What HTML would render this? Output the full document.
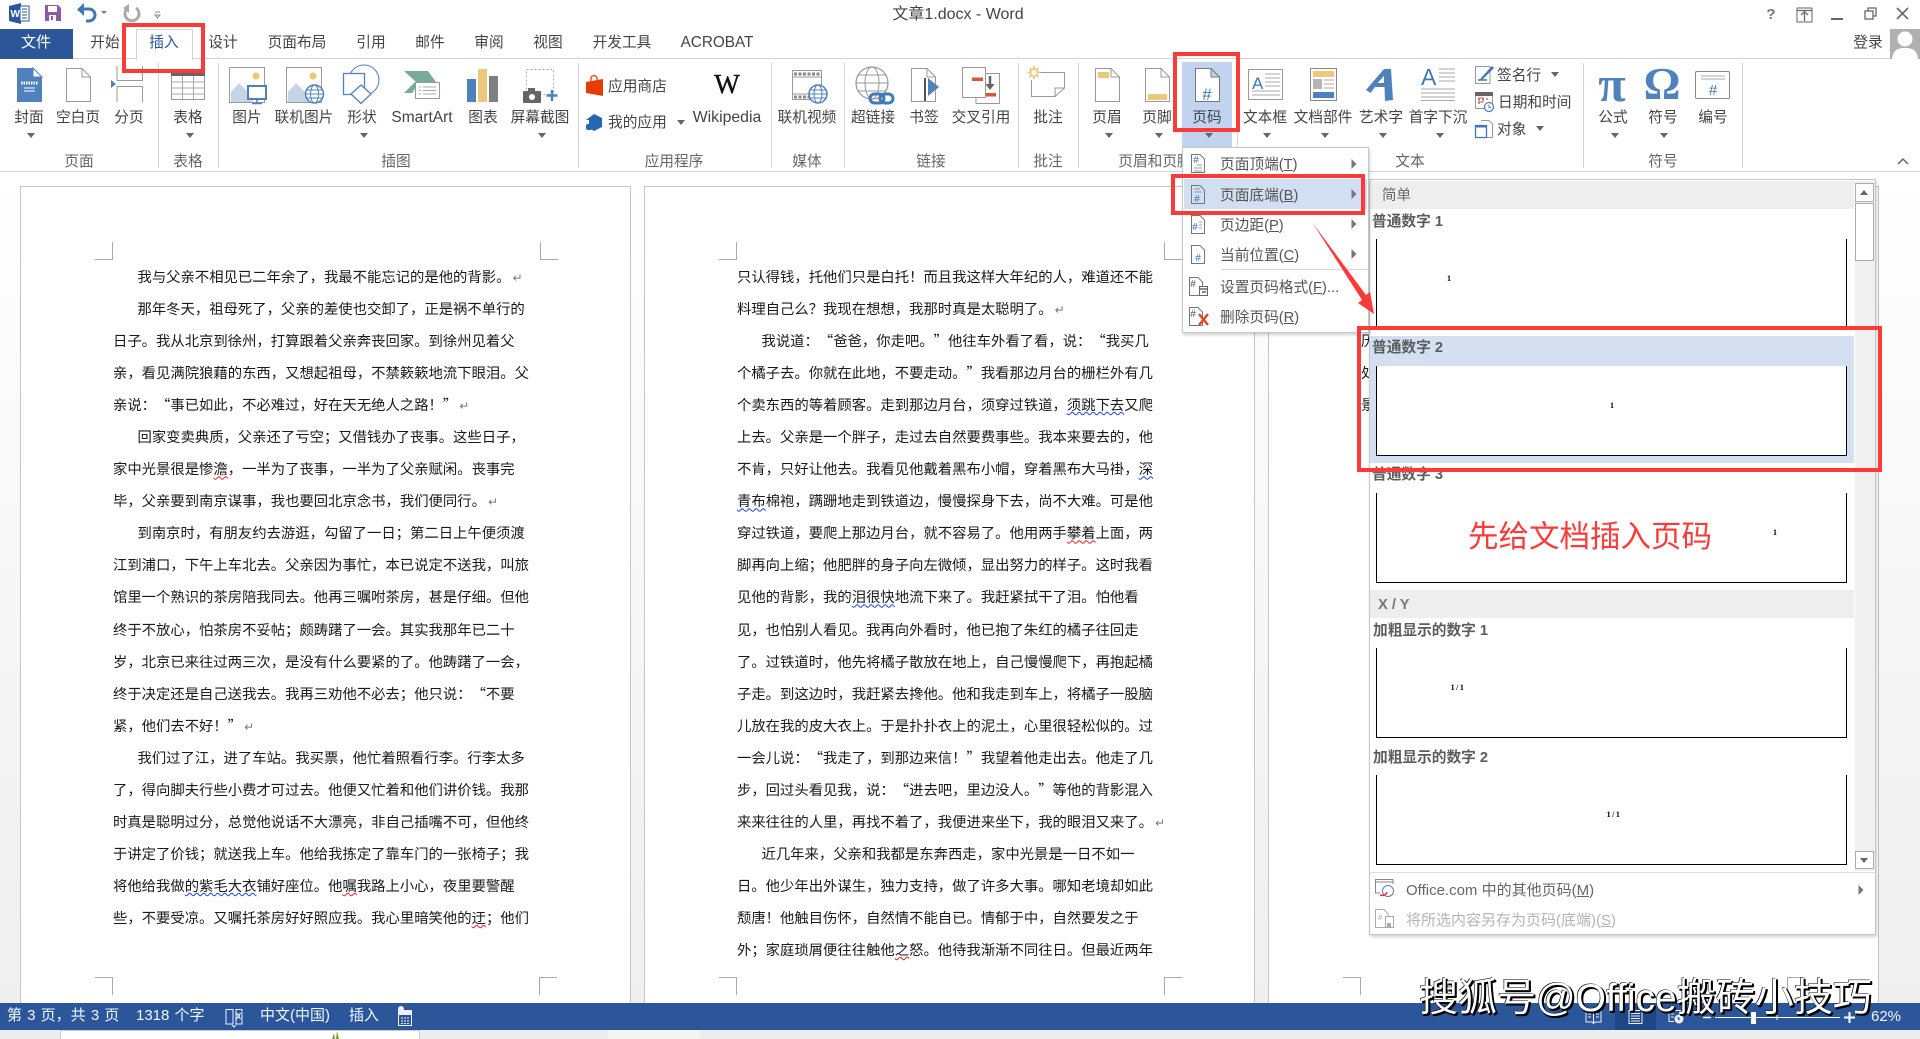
<!DOCTYPE html>
<html lang="zh-CN"><head><meta charset="utf-8"><title>文章1.docx - Word</title>
<style>
html,body{margin:0;padding:0;width:1920px;height:1039px;overflow:hidden;background:#fff}
*{box-sizing:border-box}
body{position:relative;font-family:"Liberation Sans","Noto Sans CJK SC",sans-serif;font-size:14.7px;color:#444}
.abs{position:absolute}
.c,.l{position:absolute;white-space:nowrap;line-height:20px}
.c{transform:translate(-50%,-50%)}
.l{transform:translateY(-50%)}
.g{color:#666}
.sep{position:absolute;top:63px;height:105px;width:1px;background:#d4d4d4}
.ar{position:absolute;width:0;height:0;border-left:4px solid transparent;border-right:4px solid transparent;border-top:5px solid #666;transform:translateX(-50%)}
.page{position:absolute;top:186px;height:830px;background:#fff;border:1px solid #c6c6c6}
.txt{position:absolute;top:261px;width:450px;font-family:"Noto Sans CJK SC","WenQuanYi Zen Hei",sans-serif;font-size:14.35px;line-height:32.05px;color:#1a1a1a;white-space:nowrap;text-spacing-trim:space-all;font-weight:400}
.txt div{height:32.05px}
.i{padding-left:24.5px}
.ret{font-family:"DejaVu Sans",sans-serif;font-size:12px;color:#777;margin-left:2px}
.rw{text-decoration:underline wavy #e02020 1px;text-underline-offset:1px}
.bw{text-decoration:underline wavy #2040d0 1px;text-underline-offset:1px}
.crop{position:absolute;width:18px;height:18px;border:0 solid #aaa}
.menu{position:absolute;left:1182px;top:147px;width:187px;height:186px;background:#fff;border:1px solid #c6c6c6;box-shadow:1px 2px 3px rgba(0,0,0,.18)}
.gal{position:absolute;left:1369px;top:179px;width:507px;height:756px;background:#fff;border:1px solid #c6c6c6;box-shadow:1px 2px 3px rgba(0,0,0,.18)}
.hd{position:absolute;left:1370px;width:484px;background:#eeeeee}
.b{font-weight:700;color:#5c5c5c}
.pv{position:absolute;left:1376px;width:471px;height:90px;background:#fff;border:solid #000;border-width:0 1.5px 1.5px 1.5px}
.n{position:absolute;font-family:"Liberation Serif",serif;font-size:8px;font-weight:700;line-height:8px;color:#000;transform:translate(-50%,-50%);white-space:nowrap}
.red{position:absolute;border:4px solid #fb3a3a}
.tri{position:absolute;width:0;height:0;border-top:5px solid transparent;border-bottom:5px solid transparent;border-left:5px solid #777;transform:translate(-50%,-50%)}
.st{color:#f2f5fa;font-size:15px}
</style></head><body>

<!-- document area -->
<div class="abs" style="left:0;top:172px;width:1920px;height:831px;background:linear-gradient(#fff,#efefef)"></div>
<div class="page" style="left:20px;width:611px"></div>
<div class="page" style="left:644px;width:611px"></div>
<div class="page" style="left:1268px;width:611px"></div>

<div class="crop" style="left:95px;top:242px;border-width:0 1px 1px 0"></div>
<div class="crop" style="left:540px;top:242px;border-width:0 0 1px 1px"></div>
<div class="crop" style="left:95px;top:977px;border-width:1px 1px 0 0"></div>
<div class="crop" style="left:539px;top:977px;border-width:1px 0 0 1px"></div>
<div class="crop" style="left:719px;top:242px;border-width:0 1px 1px 0"></div>
<div class="crop" style="left:1164px;top:242px;border-width:0 0 1px 1px"></div>
<div class="crop" style="left:719px;top:977px;border-width:1px 1px 0 0"></div>
<div class="crop" style="left:1164px;top:977px;border-width:1px 0 0 1px"></div>
<div class="crop" style="left:1343px;top:977px;border-width:1px 1px 0 0"></div>
<div class="crop" style="left:1787px;top:977px;border-width:1px 0 0 1px"></div>

<div class="txt" style="left:113px">
<div class="i">我与父亲不相见已二年余了，我最不能忘记的是他的背影。<span class="ret">↵</span></div>
<div class="i">那年冬天，祖母死了，父亲的差使也交卸了，正是祸不单行的</div>
<div>日子。我从北京到徐州，打算跟着父亲奔丧回家。到徐州见着父</div>
<div>亲，看见满院狼藉的东西，又想起祖母，不禁簌簌地流下眼泪。父</div>
<div>亲说：“事已如此，不必难过，好在天无绝人之路！”<span class="ret">↵</span></div>
<div class="i">回家变卖典质，父亲还了亏空；又借钱办了丧事。这些日子，</div>
<div>家中光景很是惨<span class="rw">澹</span>，一半为了丧事，一半为了父亲赋闲。丧事完</div>
<div>毕，父亲要到南京谋事，我也要回北京念书，我们便同行。<span class="ret">↵</span></div>
<div class="i">到南京时，有朋友约去游逛，勾留了一日；第二日上午便须渡</div>
<div>江到浦口，下午上车北去。父亲因为事忙，本已说定不送我，叫旅</div>
<div>馆里一个熟识的茶房陪我同去。他再三嘱咐茶房，甚是仔细。但他</div>
<div>终于不放心，怕茶房不妥帖；颇踌躇了一会。其实我那年已二十</div>
<div>岁，北京已来往过两三次，是没有什么要紧的了。他踌躇了一会，</div>
<div>终于决定还是自己送我去。我再三劝他不必去；他只说：“不要</div>
<div>紧，他们去不好！”<span class="ret">↵</span></div>
<div class="i">我们过了江，进了车站。我买票，他忙着照看行李。行李太多</div>
<div>了，得向脚夫行些小费才可过去。他便又忙着和他们讲价钱。我那</div>
<div>时真是聪明过分，总觉他说话不大漂亮，非自己插嘴不可，但他终</div>
<div>于讲定了价钱；就送我上车。他给我拣定了靠车门的一张椅子；我</div>
<div>将他给我做<span class="bw">的紫毛大衣</span>铺好座位。他<span class="rw">嘱</span>我路上小心，夜里要警醒</div>
<div>些，不要受凉。又嘱托茶房好好照应我。我心里暗笑他的<span class="rw">迂</span>；他们</div>
</div>

<div class="txt" style="left:737px">
<div>只认得钱，托他们只是白托！而且我这样大年纪的人，难道还不能</div>
<div>料理自己么？我现在想想，我那时真是太聪明了。<span class="ret">↵</span></div>
<div class="i">我说道：“爸爸，你走吧。”他往车外看了看，说：“我买几</div>
<div>个橘子去。你就在此地，不要走动。”我看那边月台的栅栏外有几</div>
<div>个卖东西的等着顾客。走到那边月台，须穿过铁道，<span class="bw">须跳下去</span>又爬</div>
<div>上去。父亲是一个胖子，走过去自然要费事些。我本来要去的，他</div>
<div>不肯，只好让他去。我看见他戴着黑布小帽，穿着黑布大马褂，<span class="bw">深</span></div>
<div><span class="bw">青布</span>棉袍，蹒跚地走到铁道边，慢慢探身下去，尚不大难。可是他</div>
<div>穿过铁道，要爬上那边月台，就不容易了。他用两手<span class="rw">攀着</span>上面，两</div>
<div>脚再向上缩；他肥胖的身子向左微倾，显出努力的样子。这时我看</div>
<div>见他的背影，我的<span class="bw">泪很快</span>地流下来了。我赶紧拭干了泪。怕他看</div>
<div>见，也怕别人看见。我再向外看时，他已抱了朱红的橘子往回走</div>
<div>了。过铁道时，他先将橘子散放在地上，自己慢慢爬下，再抱起橘</div>
<div>子走。到这边时，我赶紧去搀他。他和我走到车上，将橘子一股脑</div>
<div>儿放在我的皮大衣上。于是扑扑衣上的泥土，心里很轻松似的。过</div>
<div>一会儿说：“我走了，到那边来信！”我望着他走出去。他走了几</div>
<div>步，回过头看见我，说：“进去吧，里边没人。”等他的背影混入</div>
<div>来来往往的人里，再找不着了，我便进来坐下，我的眼泪又来了。<span class="ret">↵</span></div>
<div class="i">近几年来，父亲和我都是东奔西走，家中光景是一日不如一</div>
<div>日。他少年出外谋生，独力支持，做了许多大事。哪知老境却如此</div>
<div>颓唐！他触目伤怀，自然情不能自已。情郁于中，自然要发之于</div>
<div>外；家庭琐屑便往往触他<span class="rw">之</span>怒。他待我渐渐不同往日。但最近两年</div>
</div>

<div class="txt" style="left:1361px;top:325px;width:30px">
<div>历</div><div>处</div><div>景</div>
</div>

<!-- title bar and tabs -->
<div class="abs" style="left:0;top:0;width:1920px;height:172px;background:#fff;border-bottom:1px solid #d4d4d4"></div>
<div class="abs" style="left:0;top:58px;width:1920px;height:1px;background:#d4d4d4"></div>
<div class="abs" style="left:0;top:29px;width:73px;height:30px;background:#2b579a"></div>
<div class="abs" style="left:136px;top:29px;width:57px;height:31px;background:#fff;border:1px solid #d4d4d4;border-bottom:0"></div>

<span class="c" style="left:958px;top:14.500px;font-size:16px">文章1.docx - Word</span>
<span class="c" style="left:36px;top:43px;color:#fff;font-size:15px">文件</span>
<span class="c" style="left:105px;top:43px">开始</span>
<span class="c" style="left:164px;top:43px;color:#2b579a">插入</span>
<span class="c" style="left:223px;top:43px">设计</span>
<span class="c" style="left:297px;top:43px">页面布局</span>
<span class="c" style="left:371px;top:43px">引用</span>
<span class="c" style="left:430px;top:43px">邮件</span>
<span class="c" style="left:489px;top:43px">审阅</span>
<span class="c" style="left:548px;top:43px">视图</span>
<span class="c" style="left:622px;top:43px">开发工具</span>
<span class="c" style="left:717px;top:43px;font-size:15.300px">ACROBAT</span>
<span class="c" style="left:1868px;top:43px">登录</span>
<div class="abs" style="left:1890px;top:29px;width:30px;height:30px;background:#b0b0b0;overflow:hidden">
<svg width="30" height="30"><circle cx="15" cy="10" r="7.5" fill="#fff"/><path d="M2 30 C3 20 9 19 15 19 C21 19 27 20 28 30Z" fill="#fff"/></svg></div>

<!-- highlighted page number button -->
<div class="abs" style="left:1182px;top:62px;width:50px;height:85px;background:#c0d3ef"></div>

<!-- ribbon separators -->
<div class="sep" style="left:158px"></div><div class="sep" style="left:218px"></div>
<div class="sep" style="left:578px"></div><div class="sep" style="left:771px"></div>
<div class="sep" style="left:844px"></div><div class="sep" style="left:1018px"></div>
<div class="sep" style="left:1078px"></div><div class="sep" style="left:1237px"></div>
<div class="sep" style="left:1583px"></div><div class="sep" style="left:1742px"></div>

<!-- ribbon icons -->
<svg class="abs" style="left:0;top:0" width="1920" height="172" viewBox="0 0 1920 172" fill="none">
<!-- QAT -->
<path d="M9 6 L21 3 V24 L9 21Z" fill="#2b579a"/><rect x="20" y="6" width="9" height="15" fill="#fff" stroke="#2b579a"/>
<path d="M22 9h5M22 12h5M22 15h5M22 18h5" stroke="#2b579a"/>
<text x="10.5" y="17" font-family="Liberation Sans" font-weight="700" font-size="10" fill="#fff">W</text>
<path d="M45 5h13l3 3v13H45z" fill="#8d5ba6"/><rect x="48" y="6" width="9" height="6" fill="#fff"/><rect x="49" y="15" width="7" height="6" fill="#fff"/><rect x="51" y="16" width="2" height="4" fill="#8d5ba6"/>
<path d="M82 9h7a5 5 0 0 1 0 12h-3" stroke="#3f78b5" stroke-width="3"/><path d="M84 3 L77 9.5 L84 16Z" fill="#3f78b5"/>
<path d="M104 11l-3 0 3 3 3-3z" fill="#777"/>
<path d="M128 8a7 7 0 1 0 8 0" stroke="#aaa" stroke-width="3"/><path d="M129 4v9l-6-5z" fill="#aaa"/>
<path d="M155 12h5M155 15h5l-2.500 3z" stroke="#888"/>
<!-- window buttons -->
<text x="1771" y="19" text-anchor="middle" font-family="Liberation Sans" font-weight="700" font-size="15" fill="#777">?</text>
<rect x="1797" y="8" width="15" height="14" stroke="#666"/><path d="M1797 10.500h15M1804.500 21v-8M1801 15l3.500-3.500 3.500 3.500" stroke="#666" stroke-width="1.300"/>
<rect x="1831" y="18" width="12" height="2" fill="#666"/>
<rect x="1865" y="11" width="8" height="8" stroke="#666" stroke-width="1.300"/><path d="M1868 11V8h8v8h-3" stroke="#666" stroke-width="1.300"/>
<path d="M1897 8l11 11M1908 8l-11 11" stroke="#666" stroke-width="1.600"/>
<path d="M1898 164l5-5 5 5" stroke="#666" stroke-width="1.500"/>
<!-- cover -->
<path d="M17 68H33L42 77V102H17Z" fill="#4f81bd"/><path d="M33 68V77H42Z" fill="#fff" stroke="#4f81bd"/>
<path d="M21 83h17" stroke="#fff" stroke-width="3" stroke-dasharray="1.500 1"/><path d="M24 88h11M24 91h11" stroke="#fff"/>
<!-- blank page -->
<path d="M66.500 68.500H82L90.500 77V101.500H66.500Z M82 68.500V77H90.500" stroke="#999"/>
<!-- page break -->
<path d="M117 80.500H142.500V66M117 66V80.500M117 102V86.500H142.500V102" stroke="#999"/><path d="M111 80v8l5-4z" fill="#4f81bd"/>
<!-- table -->
<rect x="171.500" y="73.500" width="33" height="26" stroke="#999"/><rect x="171" y="73" width="34" height="3" fill="#666"/>
<path d="M171 82h34M171 88h34M171 94h34M182.500 76v24M193.500 76v24" stroke="#aaa"/>
<!-- picture -->
<rect x="229.500" y="67.500" width="35" height="35" stroke="#999"/><circle cx="256" cy="76" r="3.500" fill="#ecc77e"/>
<path d="M231 102V92l8-9 10 10 4 9z" fill="#c4d5e8"/><rect x="248" y="86" width="18" height="13" fill="#fff" stroke="#4f81bd" stroke-width="2"/><path d="M257 99v4M252 103.500h10" stroke="#4f81bd" stroke-width="1.500"/>
<!-- online picture -->
<rect x="286.500" y="67.500" width="35" height="35" stroke="#999"/><circle cx="313" cy="76" r="3.500" fill="#ecc77e"/>
<path d="M288 102V92l8-9 10 10 2 9z" fill="#c4d5e8"/>
<circle cx="314.500" cy="94" r="9" fill="#fff" stroke="#4f81bd" stroke-width="1.500"/><ellipse cx="314.500" cy="94" rx="4" ry="9" stroke="#4f81bd"/><path d="M305.500 94h18M307 90h15M307 98h15" stroke="#4f81bd"/>
<!-- shapes -->
<circle cx="364" cy="80" r="15" stroke="#4f81bd"/><rect x="343.500" y="73.500" width="21" height="21" fill="#fff" stroke="#4f81bd" stroke-width="1.300"/>
<path d="M361 85l10 9-10 9.500-10-9.500z" fill="#fff" stroke="#4f81bd" stroke-width="1.300"/>
<!-- smartart -->
<path d="M404 71H428L436 82H416Z M404 93L415 82H420L412 93Z" fill="#79ab99"/><rect x="415.500" y="82.500" width="24" height="16" fill="#fff" stroke="#999"/><path d="M419 87h2M423 87h13M419 90.500h2M423 90.500h13M419 94h2M423 94h13" stroke="#aaa"/>
<!-- chart -->
<rect x="467" y="79" width="9" height="23" fill="#4f81bd"/><rect x="478" y="69" width="9" height="33" fill="#ecc77e"/><rect x="489" y="76" width="9" height="26" fill="#808080"/>
<!-- screenshot -->
<rect x="526.500" y="69.500" width="27" height="25" stroke="#aaa" stroke-dasharray="2 2"/>
<rect x="523" y="91" width="18" height="12" rx="1" fill="#666"/><rect x="528" y="88" width="7" height="3" fill="#666"/><circle cx="532" cy="97" r="3.500" fill="#fff" stroke="#666"/>
<path d="M552 90v11M546.500 95.500h11" stroke="#4f81bd" stroke-width="2.500"/>
<!-- app store -->
<path d="M586 82l17-3v17l-17-3z" fill="#e63c00"/><path d="M591 81v-3c0-3 6-3 6 0v2" stroke="#e63c00" stroke-width="1.300"/>
<path d="M594 114l8 4v9l-8 4-5-3v-8l-3 0z" fill="#2368b5"/><rect x="586" y="124" width="6" height="6" rx="2" fill="#2368b5"/>
<!-- wikipedia W -->
<text x="727" y="93" text-anchor="middle" font-family="Liberation Serif" font-size="27" fill="#111" stroke="#111" stroke-width=".4">W</text>
<!-- online video -->
<rect x="792.500" y="70.500" width="29" height="29" stroke="#999"/><path d="M793 77h28M793 94h28" stroke="#999"/><path d="M794 74h27M794 97h27" stroke="#888" stroke-width="3" stroke-dasharray="3 1.500"/>
<circle cx="818" cy="94" r="9" fill="#fff" stroke="#4f81bd" stroke-width="1.500"/><ellipse cx="818" cy="94" rx="4" ry="9" stroke="#4f81bd"/><path d="M809 94h18M810.500 90h15M810.500 98h15" stroke="#4f81bd"/>
<!-- hyperlink -->
<circle cx="872" cy="83" r="16" stroke="#999" stroke-width="1.200"/><ellipse cx="872" cy="83" rx="7" ry="16" stroke="#999"/><path d="M856 83h32M858 75h28M858 91h28" stroke="#999"/>
<rect x="870" y="94" width="14" height="9" rx="4.500" stroke="#3f7cb5" stroke-width="3"/><rect x="880" y="94" width="13" height="9" rx="4.500" stroke="#3f7cb5" stroke-width="3"/>
<!-- bookmark -->
<path d="M911.500 68.500H927L935.500 77V101.500H911.500Z M927 68.500V77H935.500" stroke="#999"/><path d="M925 78v23" stroke="#555" stroke-width="2"/><path d="M928 78v18l11-9z" fill="#4f81bd"/>
<!-- cross ref -->
<rect x="962.500" y="67.500" width="23" height="30" fill="#fff" stroke="#999"/><path d="M986 73.500h13.500V103.500H976V98" stroke="#999"/>
<rect x="972" y="77.500" width="11" height="3.500" fill="#d9573a"/><rect x="986" y="93" width="10" height="3.500" fill="#d9573a"/>
<path d="M990 76v10" stroke="#666" stroke-width="2.500"/><path d="M985.500 84l4.500 6 4.500-6z" fill="#666"/>
<!-- comment -->
<path d="M1040.500 72.500H1064.500V88L1055 96.500H1031.500V80" stroke="#999"/><path d="M1055 96.500V88H1064.500" stroke="#999"/>
<g stroke="#ecc77e" stroke-width="1.800"><path d="M1034 66v13M1027.500 72.500h13M1029.500 68l9 9M1038.500 68l-9 9"/></g><circle cx="1034" cy="72.500" r="3.500" fill="#fff" stroke="#ecc77e" stroke-width="1.500"/>
<!-- header/footer/page number -->
<path d="M1095.500 68.500H1111L1119.500 77V101.500H1095.500Z M1111 68.500V77H1119.500" stroke="#999"/><rect x="1098" y="72" width="11" height="6" fill="#ecc77e"/>
<path d="M1145.500 68.500H1161L1169.500 77V101.500H1145.500Z M1161 68.500V77H1169.500" stroke="#999"/><rect x="1148" y="94" width="19" height="6" fill="#ecc77e"/>
<path d="M1195.500 68.500H1211L1219.500 77V101.500H1195.500Z M1211 68.500V77H1219.500" fill="#fff" stroke="#777"/>
<text x="1207" y="100" text-anchor="middle" font-family="Liberation Sans" font-size="17" fill="#3f78b5">#</text>
<!-- text box -->
<rect x="1248.500" y="69.500" width="34" height="30" fill="#fff" stroke="#999"/><text x="1252" y="89" font-family="Liberation Sans" font-size="17" fill="#3f78b5">A</text>
<path d="M1265 74h15M1265 78h15M1265 82h15M1265 86h15M1252 91h28M1252 95h28" stroke="#aaa"/>
<!-- doc parts -->
<rect x="1310.500" y="68.500" width="26" height="32" fill="#fff" stroke="#888"/><rect x="1313" y="71" width="21" height="6" fill="#ecc77e"/><rect x="1313" y="79" width="9" height="10" fill="#b5b5b5"/><path d="M1324 80h10M1324 84h10M1324 88h10" stroke="#aaa"/><rect x="1313" y="92" width="21" height="6" fill="#4f81bd"/>
<!-- wordart -->
<path fill-rule="evenodd" d="M1384 69L1391 69L1393 100L1385 101L1384.500 87L1375 87L1370.500 93L1366 90ZM1384 76L1377.500 83L1384 83Z" fill="#4f81bd"/>
<!-- drop cap -->
<text x="1421" y="85" font-family="Liberation Sans" font-size="23" fill="#3f78b5">A</text><path d="M1439 69h16M1439 73h16M1439 77h16M1439 81h16M1421 89h34M1421 93h34M1421 97h34M1421 100.500h34" stroke="#aaa"/>
<!-- signature -->
<path d="M1475.500 66.500H1490V83.500H1475.500Z" stroke="#999"/><path d="M1478 80h9" stroke="#3f78b5" stroke-width="1.500"/><path d="M1481 78l11-12 2 2-11 11-3 1z" fill="#3f78b5"/>
<!-- date -->
<rect x="1475.500" y="92.500" width="17" height="16" stroke="#999"/><rect x="1475" y="92" width="18" height="4" fill="#666"/><path d="M1478 99h2M1482 99h2M1478 103h2M1486 99h2" stroke="#aaa" stroke-width="2"/><rect x="1479" y="98" width="4" height="4" stroke="#d9573a"/>
<circle cx="1489" cy="107" r="4.500" fill="#fff" stroke="#4f81bd" stroke-width="1.300"/><path d="M1489 104.500V107.500H1491" stroke="#4f81bd"/>
<!-- object -->
<path d="M1481 120.500H1489L1492.500 124V137.500H1481" stroke="#999"/><rect x="1475.500" y="125.500" width="11" height="12" fill="#fff" stroke="#3f78b5" stroke-width="1.300"/><rect x="1475" y="125" width="12" height="2.500" fill="#3f78b5"/>
<!-- number -->
<rect x="1695.500" y="71.500" width="34" height="27" rx="1.500" stroke="#888"/><path d="M1701 76h24M1701 79h24" stroke="#aaa"/>
<text x="1713" y="95" text-anchor="middle" font-family="Liberation Sans" font-size="15" fill="#3f78b5">#</text>
</svg>

<span class="c" style="left:1612px;top:84px;font-family:'Liberation Serif',serif;font-weight:700;font-size:50px;color:#4f81bd">π</span>
<span class="c" style="left:1662px;top:84px;font-family:'Liberation Serif',serif;font-weight:700;font-size:46px;color:#4f81bd">Ω</span>

<!-- ribbon labels -->
<span class="c" style="left:29px;top:118px">封面</span>
<span class="c" style="left:78px;top:118px">空白页</span>
<span class="c" style="left:129px;top:118px">分页</span>
<span class="c" style="left:188px;top:118px">表格</span>
<span class="c" style="left:247px;top:118px">图片</span>
<span class="c" style="left:304px;top:118px">联机图片</span>
<span class="c" style="left:362px;top:118px">形状</span>
<span class="c" style="left:422px;top:118px;font-size:15.500px">SmartArt</span>
<span class="c" style="left:483px;top:118px">图表</span>
<span class="c" style="left:540px;top:118px">屏幕截图</span>
<span class="l" style="left:608px;top:87px">应用商店</span>
<span class="l" style="left:608px;top:123px">我的应用</span>
<span class="c" style="left:727px;top:118px;font-size:15.800px">Wikipedia</span>
<span class="c" style="left:807px;top:118px">联机视频</span>
<span class="c" style="left:873px;top:118px">超链接</span>
<span class="c" style="left:924px;top:118px">书签</span>
<span class="c" style="left:981px;top:118px">交叉引用</span>
<span class="c" style="left:1048px;top:118px">批注</span>
<span class="c" style="left:1107px;top:118px">页眉</span>
<span class="c" style="left:1157px;top:118px">页脚</span>
<span class="c" style="left:1207px;top:118px">页码</span>
<span class="c" style="left:1265px;top:118px">文本框</span>
<span class="c" style="left:1323px;top:118px">文档部件</span>
<span class="c" style="left:1381px;top:118px">艺术字</span>
<span class="c" style="left:1438px;top:118px">首字下沉</span>
<span class="l" style="left:1497px;top:76px">签名行</span>
<span class="l" style="left:1498px;top:103px">日期和时间</span>
<span class="l" style="left:1497px;top:130px">对象</span>
<span class="c" style="left:1613px;top:118px">公式</span>
<span class="c" style="left:1663px;top:118px">符号</span>
<span class="c" style="left:1713px;top:118px">编号</span>

<!-- group labels -->
<span class="c g" style="left:79px;top:161.500px">页面</span>
<span class="c g" style="left:188px;top:161.500px">表格</span>
<span class="c g" style="left:396px;top:161.500px">插图</span>
<span class="c g" style="left:674px;top:161.500px">应用程序</span>
<span class="c g" style="left:807px;top:161.500px">媒体</span>
<span class="c g" style="left:931px;top:161.500px">链接</span>
<span class="c g" style="left:1048px;top:161.500px">批注</span>
<span class="c g" style="left:1155px;top:161.500px">页眉和页脚</span>
<span class="c g" style="left:1410px;top:161.500px">文本</span>
<span class="c g" style="left:1663px;top:161.500px">符号</span>

<!-- dropdown arrows -->
<i class="ar" style="left:31px;top:133px"></i><i class="ar" style="left:190px;top:133px"></i>
<i class="ar" style="left:364px;top:133px"></i><i class="ar" style="left:542px;top:133px"></i>
<i class="ar" style="left:681px;top:120px"></i><i class="ar" style="left:1109px;top:133px"></i>
<i class="ar" style="left:1159px;top:133px"></i><i class="ar" style="left:1209px;top:133px"></i>
<i class="ar" style="left:1267px;top:133px"></i><i class="ar" style="left:1325px;top:133px"></i>
<i class="ar" style="left:1383px;top:133px"></i><i class="ar" style="left:1440px;top:133px"></i>
<i class="ar" style="left:1615px;top:133px"></i><i class="ar" style="left:1664px;top:133px"></i>
<i class="ar" style="left:1555px;top:72px"></i><i class="ar" style="left:1540px;top:126px"></i>

<!-- gallery -->
<div class="gal"></div>
<div class="hd" style="top:181px;height:28px"></div>
<span class="l g" style="left:1382px;top:196px;font-size:14.500px">简单</span>
<span class="l b" style="left:1372px;top:222px">普通数字 1</span>
<div class="pv" style="top:239px"></div><span class="n" style="left:1449px;top:279px">1</span>
<div class="abs" style="left:1370px;top:336px;width:484px;height:127px;background:#d4dff1"></div>
<span class="l b" style="left:1372px;top:348px">普通数字 2</span>
<div class="pv" style="top:366px"></div><span class="n" style="left:1612px;top:406px">1</span>
<span class="l b" style="left:1372px;top:475px">普通数字 3</span>
<div class="pv" style="top:493px"></div><span class="n" style="left:1775px;top:533px">1</span>
<div class="hd" style="top:590px;height:28px"></div>
<span class="l b" style="left:1378px;top:605px;color:#777">X / Y</span>
<span class="l b" style="left:1373px;top:631px">加粗显示的数字 1</span>
<div class="pv" style="top:648px"></div><span class="n" style="left:1458px;top:688px;letter-spacing:1.500px">1/1</span>
<span class="l b" style="left:1373px;top:758px">加粗显示的数字 2</span>
<div class="pv" style="top:775px"></div><span class="n" style="left:1614px;top:815px;letter-spacing:1.500px">1/1</span>

<!-- gallery scrollbar -->
<div class="abs" style="left:1855px;top:181px;width:20px;height:690px;background:#f0f0f0"></div>
<div class="abs" style="left:1855px;top:183px;width:19px;height:19px;background:#fff;border:1px solid #ababab"></div>
<div class="abs" style="left:1860px;top:190px;width:0;height:0;border-left:4.500px solid transparent;border-right:4.500px solid transparent;border-bottom:5px solid #666"></div>
<div class="abs" style="left:1855px;top:203px;width:19px;height:58px;background:#fff;border:1px solid #ababab"></div>
<div class="abs" style="left:1855px;top:851px;width:19px;height:18px;background:#fff;border:1px solid #ababab"></div>
<div class="abs" style="left:1860px;top:858px;width:0;height:0;border-left:4.500px solid transparent;border-right:4.500px solid transparent;border-top:5px solid #666"></div>
<div class="abs" style="left:1370px;top:872px;width:505px;height:1px;background:#ddd"></div>
<span class="l g" style="left:1406px;top:891px;font-size:15px">Office.com 中的其他页码(<u>M</u>)</span>
<span class="l" style="left:1406px;top:921px;color:#b4b4b4;font-size:15px">将所选内容另存为页码(底端)(<u>S</u>)</span>
<i class="tri" style="left:1861px;top:890px"></i>

<!-- dropdown menu -->
<div class="menu"></div>
<div class="abs" style="left:1184px;top:179px;width:183px;height:30px;background:#d2dff2"></div>
<span class="l" style="left:1220px;top:165px;color:#555">页面顶端(<u>T</u>)</span>
<span class="l" style="left:1220px;top:195.500px;color:#555">页面底端(<u>B</u>)</span>
<span class="l" style="left:1220px;top:225.500px;color:#555">页边距(<u>P</u>)</span>
<span class="l" style="left:1220px;top:255.500px;color:#555">当前位置(<u>C</u>)</span>
<div class="abs" style="left:1222px;top:269px;width:146px;height:1px;background:#d8d8d8"></div>
<span class="l" style="left:1220px;top:287.500px;color:#555">设置页码格式(<u>F</u>)...</span>
<span class="l" style="left:1220px;top:317.500px;color:#555">删除页码(<u>R</u>)</span>
<i class="tri" style="left:1354px;top:164px"></i><i class="tri" style="left:1354px;top:194px"></i>
<i class="tri" style="left:1354px;top:224px"></i><i class="tri" style="left:1354px;top:254px"></i>

<svg class="abs" style="left:0;top:0" width="1920" height="1039" viewBox="0 0 1920 1039" fill="none">
<g stroke="#777">
<path d="M1191.500 154.500H1200L1204.500 159V172.500H1191.500Z"/><path d="M1197 165h5M1194 168h8M1194 171h8" stroke="#999" />
<path d="M1191.500 185.500H1200L1204.500 190V203.500H1191.500Z"/><path d="M1194 189h6M1194 192h8" stroke="#999"/>
<path d="M1191.500 215.500H1200L1204.500 220V233.500H1191.500Z"/><path d="M1199 222h3M1199 225h3M1199 228h3" stroke="#999"/>
<path d="M1191.500 245.500H1200L1204.500 250V263.500H1191.500Z"/>
<path d="M1189.500 277.500H1198L1202.500 282V295.500H1189.500Z"/>
<path d="M1189.500 307.500H1198L1202.500 312V325.500H1189.500Z"/>
</g>
<g font-family="Liberation Sans" font-size="10" fill="#2f6fb5" text-anchor="middle">
<text x="1196" y="163">#</text><text x="1197" y="202">#</text><text x="1195" y="230">#</text><text x="1198" y="261">#</text><text x="1193" y="287" fill="#555">#</text><text x="1193" y="317" fill="#555">#</text>
</g>
<rect x="1199.500" y="286.500" width="8" height="9" fill="#fff" stroke="#666"/><path d="M1199 289h9M1202 292h4" stroke="#666" stroke-width="1.500"/>
<path d="M1199 314l9 11M1208 314l-9 11" stroke="#d9472b" stroke-width="2.400"/>
<!-- office.com icon -->
<path d="M1375.500 888V879.500H1393V884M1375.500 888V893H1380" stroke="#888"/><path d="M1376 882h17" stroke="#888"/>
<circle cx="1388" cy="891" r="5.500" fill="#fff" stroke="#4f81bd"/><path d="M1380 895c3 1 6 0 7-3" stroke="#e33" stroke-width="1.500"/>
<!-- save as icon -->
<path d="M1375.500 909.500H1384L1388 914V927.500H1375.500Z" stroke="#aaa"/><text x="1378" y="920" font-family="Liberation Sans" font-size="8" fill="#aaa">#</text>
<rect x="1385.500" y="916.500" width="8" height="11" fill="#fff" stroke="#aaa"/><rect x="1387" y="923" width="4" height="4" fill="#aaa"/>
<!-- red arrow -->
<path d="M1312 222L1366 295L1370 292L1374 314L1358 303L1362 300Z" fill="#fb3a3a"/>
</svg>

<span class="c" style="left:1590px;top:537px;font-size:30.500px;line-height:36px;color:#fb3a3a;font-weight:400">先给文档插入页码</span>

<!-- red annotation rects -->
<div class="red" style="left:122px;top:23px;width:83px;height:50px"></div>
<div class="red" style="left:1173px;top:52px;width:67px;height:80px"></div>
<div class="red" style="left:1171px;top:174px;width:194px;height:41px"></div>
<div class="red" style="left:1357px;top:326px;width:525px;height:146px"></div>

<!-- status bar -->
<div class="abs" style="left:0;top:1003px;width:1920px;height:27px;background:#2b579a"></div>
<div class="abs" style="left:1615px;top:1003px;width:41px;height:27px;background:#1e4788"></div>
<span class="l st" style="left:7px;top:1016px;word-spacing:1px">第 3 页，共 3 页</span>
<span class="l st" style="left:136px;top:1016px;word-spacing:1px">1318 个字</span>
<span class="l st" style="left:260px;top:1016px">中文(中国)</span>
<span class="l st" style="left:349px;top:1016px">插入</span>
<svg class="abs" style="left:0;top:1003px" width="1920" height="27" viewBox="0 0 1920 27" fill="none">
<path d="M226 6.500H233V21H226ZM236 6.500H242V21H236Z" stroke="#eef"/><path d="M236.500 10l4 6M240.500 10l-4 6" stroke="#eef" stroke-width="1.300"/><path d="M232 22l2 2 2-2" stroke="#eef"/>
<rect x="398.500" y="7.500" width="13" height="15" stroke="#eef"/><rect x="398" y="7" width="14" height="5" fill="#eef"/><circle cx="401" cy="6" r="3" fill="#eef"/><path d="M401 15h8M401 18h8M401 20.500h8" stroke="#eef" stroke-dasharray="2 1"/>
<path d="M1586 8h6l1.500 1.500L1595 8h6v11h-6l-1.500 1.500L1592 19h-6z" stroke="#eef"/><path d="M1593.500 9v11M1588 11h3M1588 14h3M1596 11h3M1596 14h3" stroke="#eef"/>
<rect x="1629" y="7.500" width="13" height="13" fill="#1e4788" stroke="#eef"/><path d="M1631 10.500h9M1631 13h9M1631 15.500h9M1631 18h9" stroke="#eef"/>
<path d="M1669 7.500h12M1669 7.500v11h5M1671 11h3M1671 14h3" stroke="#eef"/><circle cx="1679" cy="16" r="4.500" fill="#eef"/><path d="M1677 14l3 1-1 3z" fill="#2b579a"/>
<path d="M1703 14.500h8" stroke="#fff" stroke-width="1.500"/>
<path d="M1715 14.500H1840" stroke="#fff"/><rect x="1751" y="9" width="5" height="12" fill="#fff"/><path d="M1777 12v5" stroke="#fff"/>
<path d="M1844 14.500h11M1849.500 9v11" stroke="#fff" stroke-width="2"/>
</svg>
<span class="l st" style="left:1871px;top:1017px">62%</span>

<!-- below the window -->
<div class="abs" style="left:0;top:1030px;width:1920px;height:9px;background:#ededed"></div>
<div class="abs" style="left:60px;top:1030px;width:360px;height:9px;background:#fff;border:1px solid #ccc;border-bottom:0"></div>
<div class="abs" style="left:608px;top:1030px;width:92px;height:9px;background:#f5f5f5"></div>
<svg class="abs" style="left:330px;top:1030px" width="14" height="9"><path d="M2 9L4 3 5 9M6 9L7 1 9 9" fill="#6ea82e"/></svg>

<!-- watermark -->
<span class="l" style="left:1419px;top:999px;font-size:39px;line-height:46px;color:#fff;text-shadow:2px 2px 0 #000,1px 2px 0 #000,2px 1px 0 #000,-.6px -.6px 0 #000">搜狐号@Office搬砖小技巧</span>

</body></html>
